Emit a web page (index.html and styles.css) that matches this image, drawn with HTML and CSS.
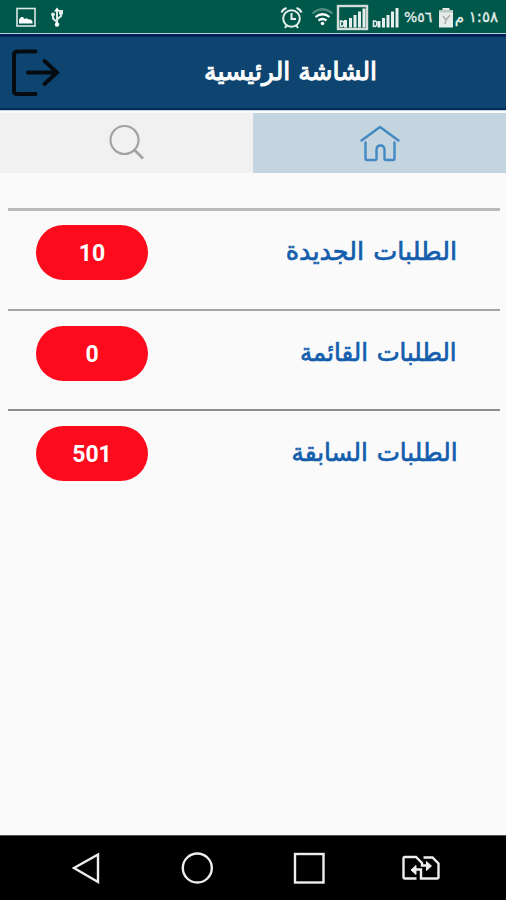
FILE: index.html
```html
<!DOCTYPE html>
<html lang="ar">
<head>
<meta charset="utf-8">
<title>الشاشة الرئيسية</title>
<link rel="stylesheet" href="styles.css">
</head>
<body>
<div class="screen">
  <div class="status">
    <svg class="status-left" width="80" height="34" viewBox="0 0 80 34">
      <rect x="17" y="8.5" width="18" height="17.5" fill="none" stroke="#dce9e5" stroke-width="1.6"/>
      <path d="M19 23.5v-4l2-2.5h2l1.500 2 2-.8 2.500 1.300h2l1.500 2v2z" fill="#fff"/>
      <path d="M57 9v16M57 22l-4-3.500v-4M57 19.500l4-3.500v-3" fill="none" stroke="#dce9e5" stroke-width="2"/>
      <path d="M54 11.500l3-4 3 4z" fill="#fff"/><rect x="59" y="10" width="4" height="4.500" fill="#dce9e5"/><circle cx="53" cy="14.500" r="2" fill="#dce9e5"/><circle cx="57" cy="24.500" r="2.200" fill="#fff"/>
    </svg>
    <svg class="status-mid" width="122" height="34" viewBox="278 0 122 34">
      <g fill="none" stroke="#e6efec" stroke-width="2"><circle cx="291.500" cy="18.500" r="8.300"/><path d="M291.500 13v6h4.500M281.500 12.500q1.500-3.500 5-4.500M301.500 12.500q-1.500-3.500-5-4.500M287 25l-2 3M296 25l2 3"/></g>
      <g fill="none" stroke-width="2.200"><path d="M312.500 13.500q10-8.500 20 0" stroke="#4d8c7f"/><path d="M315.500 17q7-5.500 14 0" stroke="#fff"/><path d="M318.500 20.500q4-3 8 0" stroke="#fff"/></g>
      <circle cx="322.500" cy="23.500" r="1.800" fill="#fff"/>
      <rect x="338" y="6" width="29" height="23" fill="none" stroke="#d5ddda" stroke-width="2.400"/>
      <g fill="#e6efec"><path d="M344 20h3v7.500h-3zM349 18h3v9.500h-3zM353.500 15h3v12.500h-3zM358 11.500h3v16h-3zM362.500 8.500h3v19h-3z"/><path d="M377.500 21h3v6.500h-3zM382 18h3v9.500h-3zM386.500 15h3v12.500h-3zM391 11.500h3v16h-3zM395.500 8h3v19.500h-3z"/></g>
      <path d="M340.500 21v5.500h1.500q2-.5 2-2.800t-2-2.700zM373.500 21v5.500h1.500q2-.5 2-2.800t-2-2.700z" fill="none" stroke="#e6efec" stroke-width="1.600"/>
    </svg>
    <span class="percent" dir="ltr">%٥٦</span>
    <svg class="battery" width="14" height="34" viewBox="0 0 14 34"><path d="M3.500 8h7v2H14v17.500H0V10h3.500z" fill="#e5ece9"/><rect y="10" width="14" height="2.500" fill="#b9c9c4"/><path d="M4 16l3 4 4-5M7 20l-1 4" fill="none" stroke="#aaa" stroke-width="1.400"/></svg>
    <span class="clock" dir="rtl">١:٥٨ م</span>
  </div>
  <header class="header">
    <svg class="exit" width="50" height="48" viewBox="0 0 50 48" fill="none" stroke="#050b10" stroke-width="4" stroke-linecap="round" stroke-linejoin="round"><path d="M24.500 3.500H6.500q-3.500 0-3.500 3.500V42.500q0 3.500 3.500 3.500h18"/><path d="M17 24.500h29M33.500 13l12.500 11.500L33.500 36" stroke-linejoin="miter"/></svg>
    <h1 class="title" dir="rtl">الشاشة الرئيسية</h1>
  </header>
  <nav class="tabs">
    <div class="tab"><svg width="40" height="40" viewBox="0 0 40 40" fill="none" stroke="#a3a3a3" stroke-width="2.200"><circle cx="17.500" cy="17" r="14"/><path d="M27 26.500l9 9" stroke-width="2.800"/></svg></div>
    <div class="tab tab-active"><svg width="42" height="40" viewBox="0 0 42 40" fill="none" stroke="#4289c3" stroke-width="2.400" stroke-linejoin="round" stroke-linecap="round"><path d="M2.500 17.500L21 4l18.500 13.500M6.500 19.500V35.500q0 1.500 1.500 1.500h8q1.500 0 1.500-1.500V27q0-4.500 4-4.500t4 4.500v8.500q0 1.500 1.500 1.500h7q1.500 0 1.500-1.500V19.500"/></svg></div>
  </nav>
  <main class="list">
    <section class="row row-first"><span class="pill">10</span><span class="label label-new" dir="rtl">الطلبات الجديدة</span></section>
    <section class="row row-second"><span class="pill">0</span><span class="label label-open" dir="rtl">الطلبات القائمة</span></section>
    <section class="row row-third"><span class="pill">501</span><span class="label label-past" dir="rtl">الطلبات السابقة</span></section>
  </main>
  <footer class="navbar">
    <svg width="506" height="64" viewBox="0 836 506 64" fill="none" stroke="#eee" stroke-width="2.400">
      <path d="M98 854.500v27.500l-24-14z"/><circle cx="197.300" cy="868" r="14.500"/><rect x="295" y="854" width="28.500" height="28.500"/>
      <path d="M416.500 878.500H405q-1.500 0-1.500-1.500v-18.500q0-1.500 1.500-1.500h11l6 6v2.500h6M423.500 857.500h9l6 6v13.500q0 1.500-1.500 1.500h-16v-9H414"/><path d="M426.500 861.500l5 4.500-5 4.500zM416 865.500l-5 4.500 5 4.500z" fill="#eee" stroke-width="1"/>
    </svg>
  </footer>
</div>
</body>
</html>
```

FILE: styles.css
```css
* { box-sizing: border-box; }
body { margin: 0; background: #fafafa; font-family: Roboto, "DejaVu Sans", sans-serif; }
svg { display: block; flex: none; }
.screen { width: 506px; height: 900px; display: flex; flex-direction: column; overflow: hidden; }
.status { height: 34px; flex: none; display: flex; background: #00584a; color: #e6efec; white-space: nowrap; }
.status-mid { margin-left: 198px; }
.percent { width: 34px; margin-left: 4px; font: 14px/35px "DejaVu Sans", sans-serif; -webkit-text-stroke: 0.3px; }
.battery { margin-left: 1px; }
.clock { margin-left: 3px; width: 42px; font: 15px/35px "DejaVu Sans", sans-serif; -webkit-text-stroke: 0.3px; }
.header { height: 76px; flex: none; display: flex; align-items: center; background: #0d4570; border-top: 2px solid #001c55; border-bottom: 2px solid #062a59; box-shadow: inset 0 1px #062a59; outline: 1px solid #c3d3e4; padding-left: 11px; }
.title { margin: 0 0 0 142px; width: 174px; color: #fff; font: 25px/40px "DejaVu Sans", sans-serif; -webkit-text-stroke: 1px; white-space: nowrap; }
.tabs { height: 60px; margin-top: 3px; flex: none; display: flex; }
.tab { flex: 1; display: flex; align-items: center; justify-content: center; background: #f1f1f1; }
.tab-active { background: #c4d5df; }
.list { flex: 1; padding: 35px 6px 0 8px; }
.row { display: flex; justify-content: space-between; padding: 14px 43px 0 28px; }
.row-first { height: 101px; border-top: 3px solid #bababa; }
.row-second { height: 100px; border-top: 2px solid #a4a4a4; padding-top: 15px; }
.row-third { height: 101px; border-top: 2px solid #8d8d8d; padding-top: 15px; }
.pill { width: 112px; height: 55px; border-radius: 28px; background: #fb0b1c; color: #fff; font: bold 23px/57px Roboto, sans-serif; text-align: center; }
.label { color: #145ead; font: 25px/54px "DejaVu Sans", sans-serif; -webkit-text-stroke: 0.7px; white-space: nowrap; transform-origin: right center; }
.label-new { word-spacing: 1px; transform: scaleX(1.02); }
.label-open { word-spacing: 1px; transform: scaleX(0.975); }
.label-past { word-spacing: 1px; transform: scaleX(0.985); }
.navbar { height: 65px; flex: none; background: #000; border-top: 1px solid #555; }
```
